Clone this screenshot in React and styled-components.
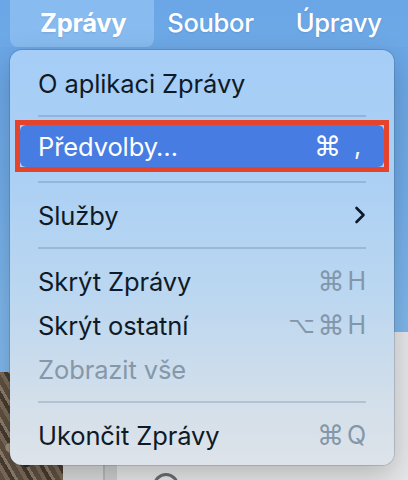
import React from 'react';
import styled, { createGlobalStyle } from 'styled-components';

const Global = createGlobalStyle`
  html, body { margin: 0; padding: 0; }
  body { font-family: Inter, "Noto Sans", "DejaVu Sans", sans-serif; -webkit-font-smoothing: antialiased; }
`;

const Desktop = styled.div`
  position: relative;
  width: 408px;
  height: 480px;
  overflow: hidden;
  background: linear-gradient(180deg, #69a5e6 0%, #70abe8 35%, #7db6eb 65%, #85bbec 100%);
`;

const MenuBar = styled.div`
  display: flex;
  align-items: stretch;
  height: 47px;
  padding-left: 10px;
  background: linear-gradient(180deg, #6aa6e6, #6ea9e7);
`;

const MenuTitle = styled.div`
  display: flex;
  align-items: center;
  padding: ${p => (p.$active ? '0 28px 2px 30px' : '0 21px 2px')};
  margin-right: ${p => (p.$active ? '-8px' : '0')};
  font-size: 25.5px;
  font-weight: ${p => (p.$active ? 700 : 500)};
  color: #fff;
  letter-spacing: -0.3px;
  background: ${p => (p.$active ? '#88bcf0' : 'transparent')};
  border-radius: 0 0 8px 8px;
  text-shadow: 0 1px 2px rgba(20, 60, 120, 0.15);
`;

const Rock = styled.div`
  position: absolute;
  left: 0;
  top: 372px;
  width: 66px;
  height: 108px;
  background:
    radial-gradient(circle at 20% 30%, #2e261e 0 3px, transparent 4px),
    radial-gradient(circle at 70% 60%, #2a231c 0 4px, transparent 5px),
    radial-gradient(circle at 40% 85%, #30281f 0 3px, transparent 4px),
    radial-gradient(circle at 80% 20%, #9a8a76 0 3px, transparent 4px),
    radial-gradient(circle at 15% 70%, #a08f7b 0 4px, transparent 5px),
    repeating-linear-gradient(60deg, #5e5042 0 5px, #7a6957 5px 9px, #473b30 9px 13px, #8c7c69 13px 16px);
`;

const Window = styled.div`
  position: absolute;
  left: 63px;
  top: 332px;
  right: 0;
  bottom: 0;
  display: flex;
  background: #e6e7e9;
`;

const Sidebar = styled.div`
  width: 40px;
  background: #d9dadc;
  border-right: 2px solid #b7b8ba;
`;

const SideStrip = styled.div`
  width: 12px;
  background: #cdcecf;
`;

const WindowMain = styled.div`
  flex: 1;
  padding: 141px 0 0 36px;
`;

const Avatar = styled.div`
  width: 26px;
  height: 26px;
  border-radius: 50%;
  border: 3px solid #6a6c70;
  box-sizing: border-box;
`;

const Menu = styled.div`
  position: absolute;
  left: 10px;
  top: 50px;
  width: 384px;
  box-sizing: border-box;
  padding: 11px 5px 8px;
  border-radius: 12px;
  background: linear-gradient(180deg, #a5cdf6 0%, #abd0f4 30%, #bcd7f0 60%, #d3dfea 85%, #dde3e9 100%);
  box-shadow: 0 0 0 1px rgba(30, 60, 100, 0.18), 0 10px 30px rgba(0, 0, 0, 0.22);
  display: flex;
  flex-direction: column;
`;

const Row = styled.div`
  display: flex;
  align-items: center;
  justify-content: space-between;
  height: 44px;
  padding: 0 23px;
  font-size: 25.5px;
  letter-spacing: -0.1px;
  color: ${p => (p.$disabled ? '#8597a9' : '#0f1a28')};
`;

const Annotation = styled.div`
  border: 5px solid #e5432b;
  margin: -7px 0 -1px;
`;

const HighlightRow = styled.div`
  display: flex;
  align-items: center;
  justify-content: space-between;
  height: 42px;
  padding: 0 18px;
  border-radius: 6px;
  background: #477ce2;
  color: #fff;
  font-size: 25.5px;
  letter-spacing: -0.1px;
`;

const Separator = styled.div`
  height: 22px;
  padding: 0 23px;
  display: flex;
  align-items: center;
  &::after {
    content: '';
    flex: 1;
    height: 2px;
    background: rgba(50, 80, 115, 0.2);
  }
`;

const Shortcut = styled.span`
  display: flex;
  align-items: center;
  gap: ${p => p.$gap || '3px'};
  padding-right: ${p => p.$pr || '0'};
  font-size: 25px;
  color: ${p => (p.$light ? '#ffffff' : '#8397aa')};
`;

const Sym = styled.span`
  font-family: "DejaVu Sans", sans-serif;
  font-size: ${p => p.$size || '27px'};
  line-height: 1;
`;

const Chevron = () => (
  <svg width="12" height="18" viewBox="0 0 12 18" fill="none">
    <path d="M2.5 2 L9.5 9 L2.5 16" stroke="#0f1a28" strokeWidth="2.6" strokeLinecap="round" strokeLinejoin="round" />
  </svg>
);

export default function App() {
  return (
    <>
      <Global />
      <Desktop>
        <MenuBar>
          <MenuTitle $active>Zprávy</MenuTitle>
          <MenuTitle>Soubor</MenuTitle>
          <MenuTitle>Úpravy</MenuTitle>
        </MenuBar>
        <Rock />
        <Window>
          <Sidebar />
          <SideStrip />
          <WindowMain>
            <Avatar />
          </WindowMain>
        </Window>
        <Menu>
          <Row>O aplikaci Zprávy</Row>
          <Separator />
          <Annotation>
            <HighlightRow>
              <span>Předvolby…</span>
              <Shortcut $light $gap="13px" $pr="5px">
                <Sym>⌘</Sym>
                <span>,</span>
              </Shortcut>
            </HighlightRow>
          </Annotation>
          <Separator />
          <Row>
            <span>Služby</span>
            <Chevron />
          </Row>
          <Separator />
          <Row>
            <span>Skrýt Zprávy</span>
            <Shortcut><Sym>⌘</Sym><span>H</span></Shortcut>
          </Row>
          <Row>
            <span>Skrýt ostatní</span>
            <Shortcut><Sym $size="23px">⌥</Sym><Sym>⌘</Sym><span>H</span></Shortcut>
          </Row>
          <Row $disabled>Zobrazit vše</Row>
          <Separator />
          <Row>
            <span>Ukončit Zprávy</span>
            <Shortcut><Sym>⌘</Sym><span>Q</span></Shortcut>
          </Row>
        </Menu>
      </Desktop>
    </>
  );
}
